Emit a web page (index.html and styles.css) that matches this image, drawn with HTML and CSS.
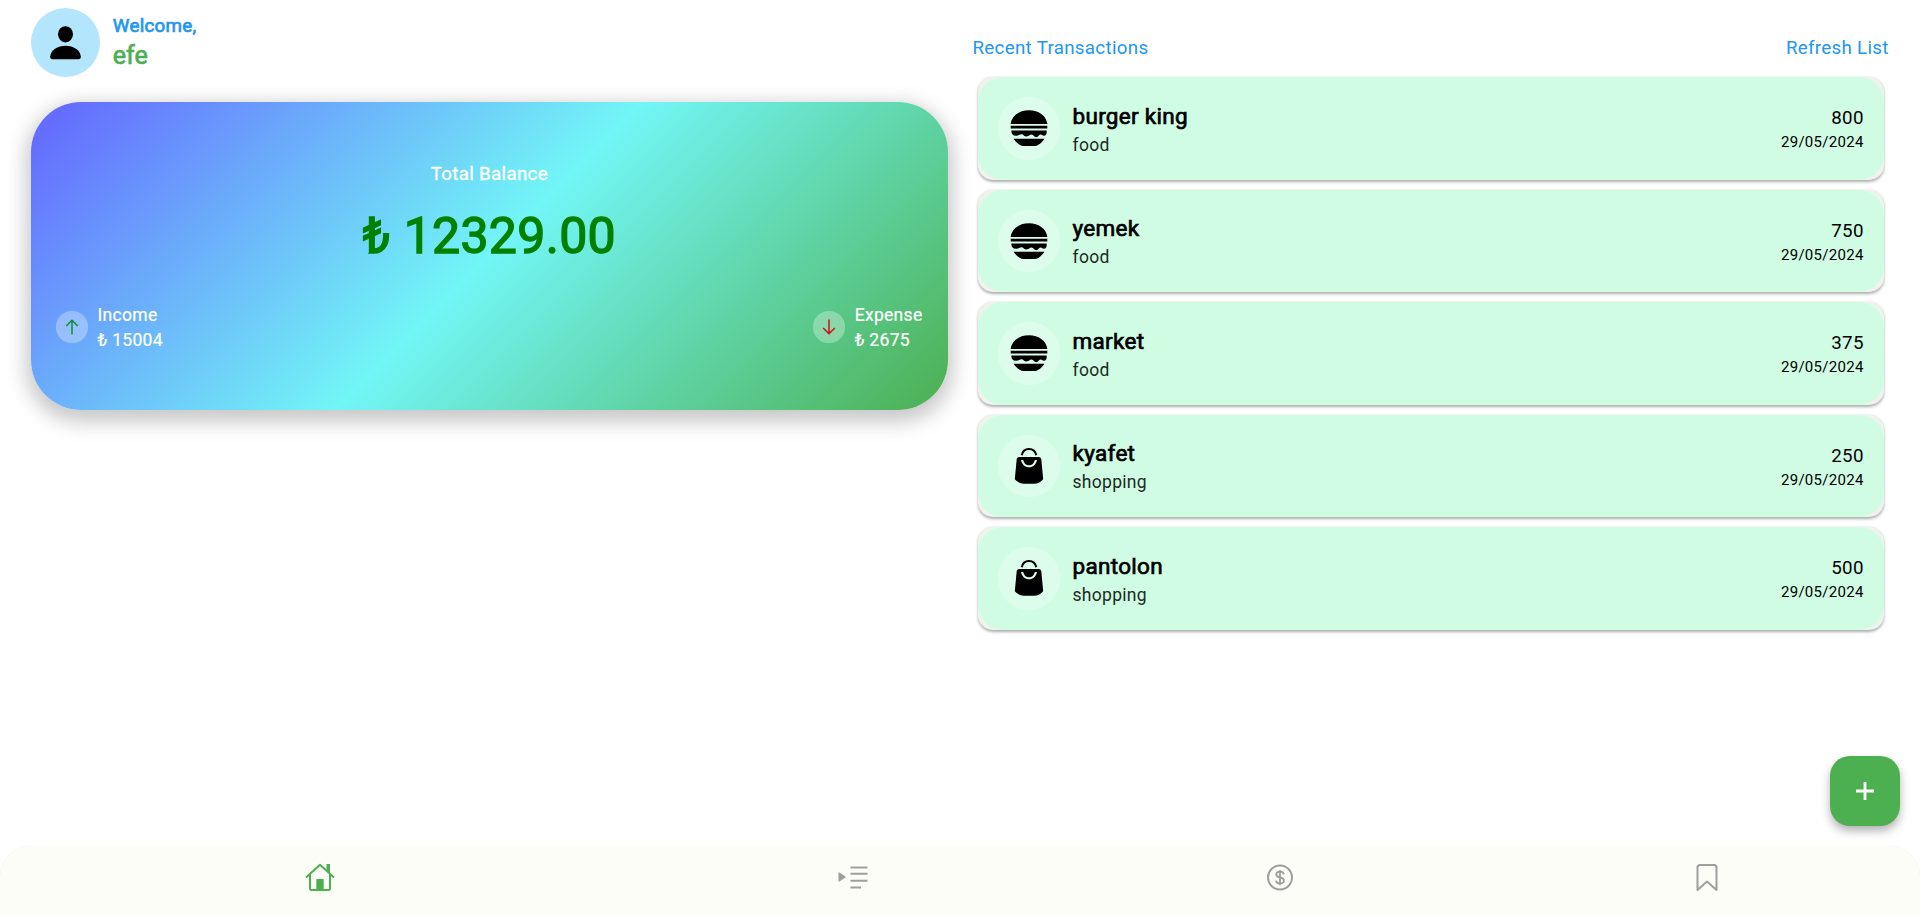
FILE: index.html
```
<!DOCTYPE html>
<html lang="en">
<head>
<meta charset="utf-8">
<title>Wallet</title>
<link rel="stylesheet" href="styles.css">
</head>
<body>
<svg width="0" height="0" class="defs">
  <symbol id="burger" viewBox="0 0 38 38">
    <path d="M.7 14.500C2 6.500 9.500 1.200 19 1.200S36 6.500 37.300 14.500V15H.7ZM.7 16.800H37.300V19.600H.7ZM1.500 21.400H36.500C37.300 24 36 26.800 34 26.800C32 26.800 32 25.600 30.500 25.600C29 25.600 28.500 28.300 26.200 28.300C24 28.300 23.500 25.600 21.500 25.600C19.500 25.600 19 27.500 16.500 27.500C14 27.500 13.500 25.200 11.500 25.200C9.500 25.200 9 26.800 6 26.800C2.500 26.800 1 24.500 1.500 21.400ZM3.500 29.700H34.500C31.500 34 28 37 24.500 37H13.500C10 37 6.500 34 3.500 29.700Z"/>
  </symbol>
  <symbol id="bag" viewBox="0 0 38 38">
    <path d="M11.700 8.300C12.500 4.100 15.500 1.900 19 1.900S25.500 4.100 26.300 8.300" fill="none" stroke="#000" stroke-width="2"/>
    <path fill-rule="evenodd" d="M9.500 10H28.500Q31 10 31.300 12.300L33.200 32.300Q29 36.800 24.500 36.800H13.500Q9 36.800 4.800 32.300L6.700 12.300Q7 10 9.500 10ZM11 13C12 17.700 15 20.300 19 20.300S26 17.700 27 13H24.800C24 16.300 22 18.300 19 18.300S14 16.300 13.200 13Z"/>
  </symbol>
</svg>
<main class="page">
  <section class="left">
    <header class="profile">
      <div class="avatar">
        <svg width="31" height="34" viewBox="0 0 31 34"><ellipse cx="15.500" cy="8.300" rx="7.500" ry="8.100"/><path d="M.2 30.500C.8 24 7.500 19.700 15.500 19.700S30.200 24 30.800 30.500Q31 33.300 28.300 33.300H2.700Q0 33.300 .2 30.500Z"/></svg>
      </div>
      <div class="who"><div class="welcome">Welcome,</div><div class="name">efe</div></div>
    </header>
    <div class="balance">
      <div class="label">Total Balance</div>
      <div class="total">₺ 12329.00</div>
      <div class="flows">
        <div class="flow">
          <span class="dot"><svg width="14" height="16" viewBox="0 0 14 16" class="up"><path d="M7 15.500V1.200M1.200 7L7 1.200L12.800 7"/></svg></span>
          <div><div>Income</div><div>₺ 15004</div></div>
        </div>
        <div class="flow">
          <span class="dot"><svg width="14" height="16" viewBox="0 0 14 16" class="down"><path d="M7 .5V14.800M1.200 9L7 14.800L12.800 9"/></svg></span>
          <div><div>Expense</div><div>₺ 2675</div></div>
        </div>
      </div>
    </div>
  </section>
  <section class="right">
    <div class="head"><span>Recent Transactions</span><span>Refresh List</span></div>
    <div class="list">
      <article class="card"><div class="row"><div class="icon"><svg><use href="#burger"/></svg></div><div class="info"><div class="title">burger king</div><div class="kind">food</div></div><div class="amt"><div class="num">800</div><div class="date">29/05/2024</div></div></div></article>
      <article class="card"><div class="row"><div class="icon"><svg><use href="#burger"/></svg></div><div class="info"><div class="title">yemek</div><div class="kind">food</div></div><div class="amt"><div class="num">750</div><div class="date">29/05/2024</div></div></div></article>
      <article class="card"><div class="row"><div class="icon"><svg><use href="#burger"/></svg></div><div class="info"><div class="title">market</div><div class="kind">food</div></div><div class="amt"><div class="num">375</div><div class="date">29/05/2024</div></div></div></article>
      <article class="card"><div class="row"><div class="icon"><svg><use href="#bag"/></svg></div><div class="info"><div class="title">kyafet</div><div class="kind">shopping</div></div><div class="amt"><div class="num">250</div><div class="date">29/05/2024</div></div></div></article>
      <article class="card"><div class="row"><div class="icon"><svg><use href="#bag"/></svg></div><div class="info"><div class="title">pantolon</div><div class="kind">shopping</div></div><div class="amt"><div class="num">500</div><div class="date">29/05/2024</div></div></div></article>
    </div>
  </section>
</main>
<button class="fab" aria-label="Add"><svg width="18" height="18" viewBox="0 0 18 18"><path d="M9 0V18M0 9H18"/></svg></button>
<nav class="nav">
  <a class="on"><svg width="30" height="30" viewBox="0 0 30 30"><path d="M1 14.500L15 1.700L29 14.500M5 11.500V25.200Q5 27 6.800 27H23.200Q25 27 25 25.200V11.500"/><path class="solid" d="M11.300 16H18.700V27H11.300ZM21.500 1H25V10L21.500 6.800Z"/></svg></a>
  <a><svg width="30" height="30" viewBox="0 0 30 30"><path d="M12.500 4.500H29.500M12.500 10.800H29.500M12.500 17.700H29.500M12.500 24.500H23"/><path class="solid" d="M.500 9.800Q.500 9 1.400 9.500L7.200 13.300Q8 14 7.200 14.700L1.400 18.500Q.5 19 .5 18.200Z"/></svg></a>
  <a><svg width="30" height="30" viewBox="0 0 30 30"><circle cx="15" cy="14.500" r="12"/><path class="thin" d="M18.700 11.300C18.500 9.500 17 8.700 15 8.700C12.800 8.700 11.300 9.800 11.300 11.500C11.300 13.300 12.700 14 15 14.500C17.500 15 18.900 15.700 18.900 17.600C18.900 19.400 17.300 20.500 15 20.500C12.800 20.500 11.200 19.500 11 17.600M15 7V22.200"/></svg></a>
  <a><svg width="30" height="30" viewBox="0 0 30 30"><path d="M5.500 27V4.500Q5.500 2 8 2H22Q24.500 2 24.500 4.500V27L15 18.500Z"/></svg></a>
</nav>
</body>
</html>
```
FILE: styles.css
```
* { box-sizing: border-box; }
body {
  margin: 0;
  height: 915px;
  overflow: hidden;
  background: #fff;
  color: #000;
  font-family: Roboto, "Liberation Sans", sans-serif;
  display: flex;
  flex-direction: column;
  white-space: nowrap;
}
.defs { position: absolute; }
.page { flex: 1; display: flex; gap: 25px; padding: 0 31.250px; }
.left { width: 916.250px; }
.right { flex: 1; min-width: 0; }

.profile { display: flex; gap: 12.500px; height: 102px; padding-top: 8.300px; }
.avatar {
  width: 69px; height: 69px; border-radius: 50%;
  background: #b3e5fc;
  display: flex; align-items: center; justify-content: center;
}
.who { padding-top: 5.700px; -webkit-text-stroke: .7px currentColor; }
.welcome { color: #2196f3; font-size: 18.750px; line-height: 25px; letter-spacing: .3px; }
.name { color: #4caf50; font-size: 25px; line-height: 34px; }

.balance {
  height: 307.500px;
  border-radius: 50px;
  padding: 60px 25px 0;
  background: linear-gradient(135deg, #6464ff, #72f6f6 50%, #4caf50);
  box-shadow: 0 7px 20px 5px rgba(0, 0, 0, .22);
  color: #fff;
  text-align: center;
}
.label { font-size: 18.750px; line-height: 25px; letter-spacing: .3px; -webkit-text-stroke: .3px currentColor; }
.total { margin-top: 16px; font-size: 50px; line-height: 66px; letter-spacing: .3px; color: #008000; -webkit-text-stroke: 1.400px currentColor; }
.flows { margin-top: 34px; display: flex; justify-content: space-between; text-align: left; font-size: 17.500px; line-height: 25px; letter-spacing: .3px; -webkit-text-stroke: .2px currentColor; }
.flow { display: flex; align-items: center; gap: 10px; }
.dot {
  width: 31.250px; height: 31.250px; margin-top: -2px; border-radius: 50%;
  background: rgba(255, 255, 255, .3);
  display: flex; align-items: center; justify-content: center;
}
.dot path { fill: none; stroke-width: 1.500; }
.up path { stroke: #0a8f3c; }
.down path { stroke: #c81414; }

.head {
  display: flex; justify-content: space-between;
  height: 77px; padding-top: 36px;
  color: #2196f3; font-size: 18.750px; line-height: 25px; letter-spacing: .3px;
}
.list { display: flex; flex-direction: column; gap: 10px; padding: 0 5px; }
.card {
  height: 102.500px; border-radius: 15px;
  background: #eff3ee;
  box-shadow: 0 1.500px 3px rgba(0, 0, 0, .32);
}
.row {
  height: 102.500px; border-radius: 25px;
  padding: 0 20px;
  background: #d0fce4;
  display: flex; align-items: center;
}
.icon {
  width: 62.500px; height: 62.500px; border-radius: 50%;
  background: #dcfdeb;
  display: flex; align-items: center; justify-content: center;
}
.icon svg { width: 38px; height: 38px; }
.info { flex: 1; margin-left: 12.500px; padding-top: 5px; }
.title { font-size: 22.500px; line-height: 29px; letter-spacing: .3px; -webkit-text-stroke: .7px currentColor; }
.kind { font-size: 17.500px; line-height: 29px; letter-spacing: .3px; color: #1c2a22; }
.amt { text-align: right; padding-top: 3px; }
.num { font-size: 18.750px; line-height: 25px; letter-spacing: .3px; }
.date { font-size: 15px; line-height: 22px; letter-spacing: .3px; }

.fab {
  position: absolute; left: 1830px; top: 755.500px;
  width: 70px; height: 70px; padding: 0; border: 0; border-radius: 20px;
  background: #4caf50;
  box-shadow: 0 5px 10px rgba(0, 0, 0, .3);
  display: flex; align-items: center; justify-content: center;
}
.fab path { stroke: #fff; stroke-width: 2.800; }

.nav {
  height: 69.500px; border-radius: 31px 31px 0 0;
  background: #fcfdf6;
  box-shadow: 0 0 1px rgba(0, 0, 0, .1);
  display: grid; grid-template-columns: 1.5fr 1fr 1fr 1fr;
  color: #9e9e9e;
}
.nav a { display: flex; justify-content: center; padding-top: 17.500px; }
.nav path, .nav circle { fill: none; stroke: currentColor; stroke-width: 2; stroke-linejoin: round; }
.nav .solid { fill: currentColor; stroke: none; }
.nav .thin { stroke-width: 1.800; }
.on { color: #4caf50; }
```
